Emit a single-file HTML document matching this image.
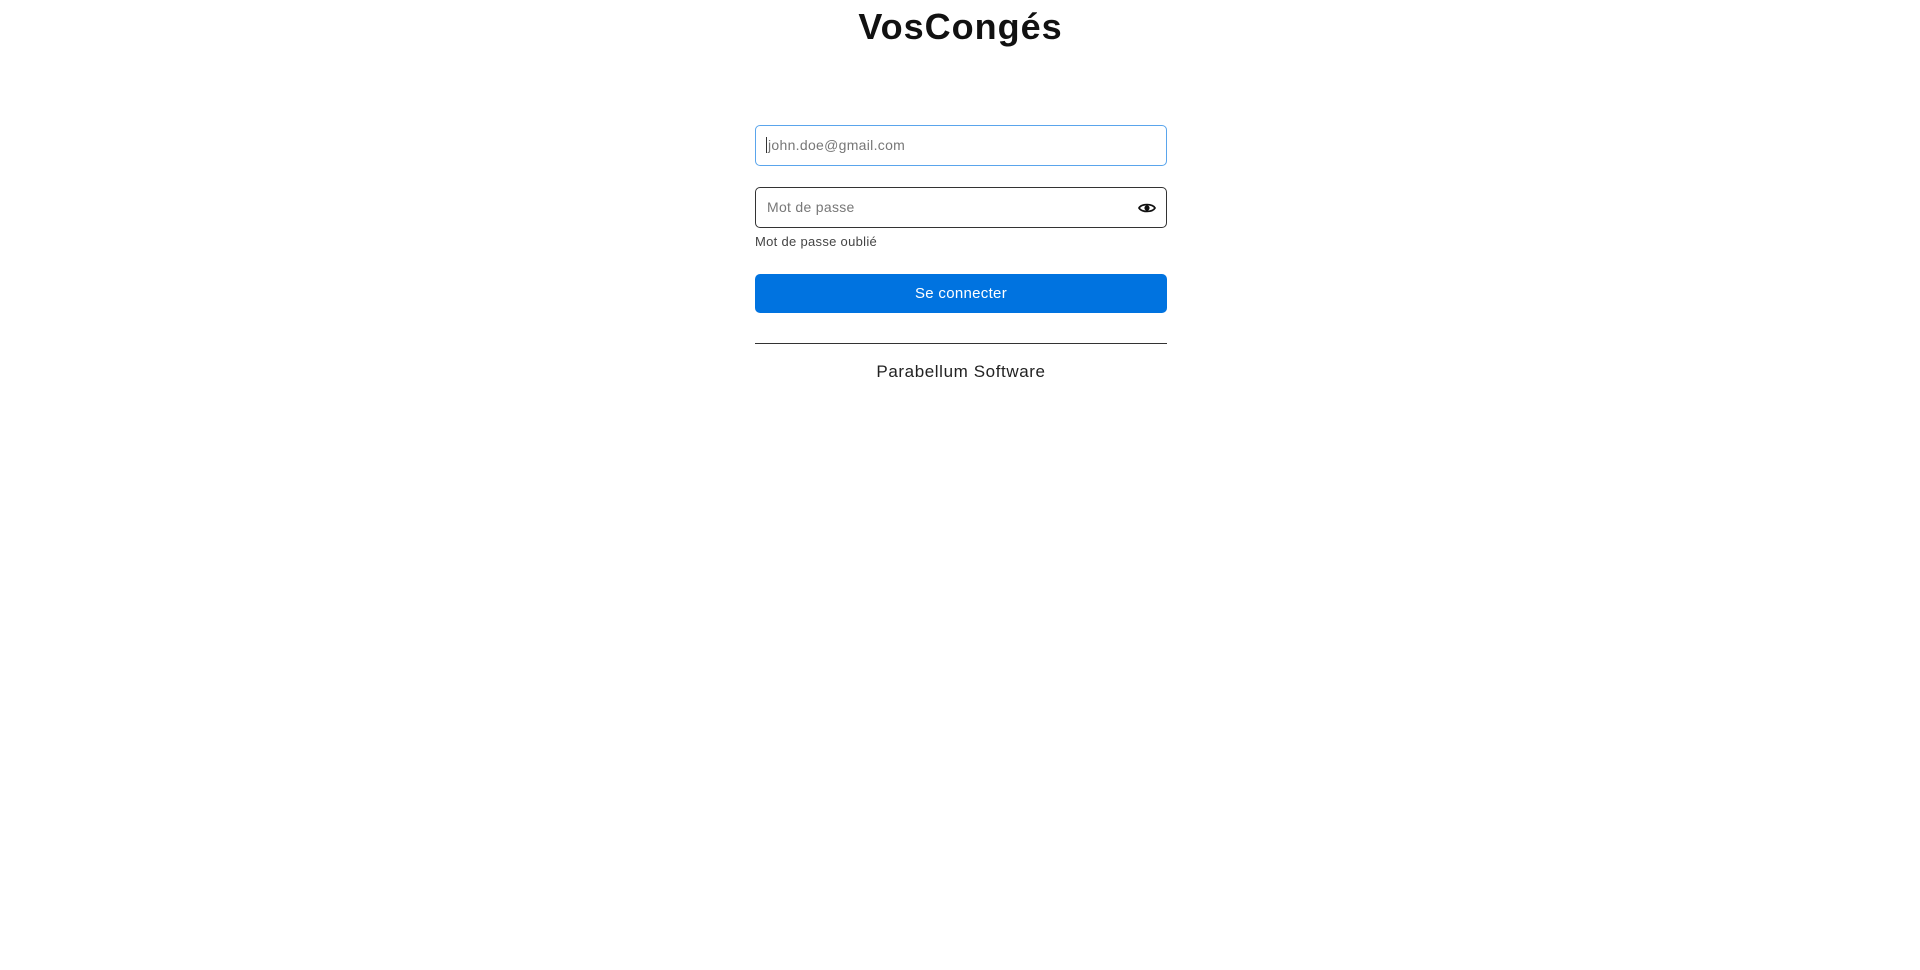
<!DOCTYPE html>
<html><head><meta charset="utf-8"><style>
body{margin:0;background:#fff;font-family:"Liberation Sans",sans-serif;width:1920px;height:970px;position:relative}
.t{position:absolute;top:6px;left:0;width:1921px;text-align:center;font-size:36px;font-weight:bold;color:#111;letter-spacing:1px}
.in{position:absolute;left:755px;width:410px;height:39px;border:1px solid #333;border-radius:5px;box-sizing:content-box}
.in span{position:absolute;left:11px;top:11px;font-size:14px;color:#777;letter-spacing:0.3px}
.btn{position:absolute;left:755px;top:274px;width:412px;height:39px;background:#0073e0;border-radius:5px;color:#fff;font-size:15px;text-align:center;line-height:39px;letter-spacing:0.3px}
</style></head><body>
<div class="t">VosCongés</div>
<div class="in" style="top:125px;border:1.5px solid #5aa5ec"><span style="border-left:1px solid #333;padding-left:1px;left:10px">john.doe@gmail.com</span></div>
<div class="in" style="top:187px"><span>Mot de passe</span>
<svg style="position:absolute;right:10px;top:12px" width="18" height="16" viewBox="0 0 18 16"><path d="M1 8C3.5 3.5 14.5 3.5 17 8C14.5 12.5 3.5 12.5 1 8Z" fill="none" stroke="#111" stroke-width="1.8"/><circle cx="9" cy="8" r="2.6" fill="#111"/></svg></div>
<div style="position:absolute;left:755px;top:234px;font-size:13px;color:#444;letter-spacing:0.3px">Mot de passe oublié</div>
<div class="btn">Se connecter</div>
<div style="position:absolute;left:755px;top:343px;width:412px;height:1px;background:#333"></div>
<div style="position:absolute;left:755px;top:362px;width:412px;text-align:center;font-size:17px;color:#222;letter-spacing:0.6px">Parabellum Software</div>
</body></html>
